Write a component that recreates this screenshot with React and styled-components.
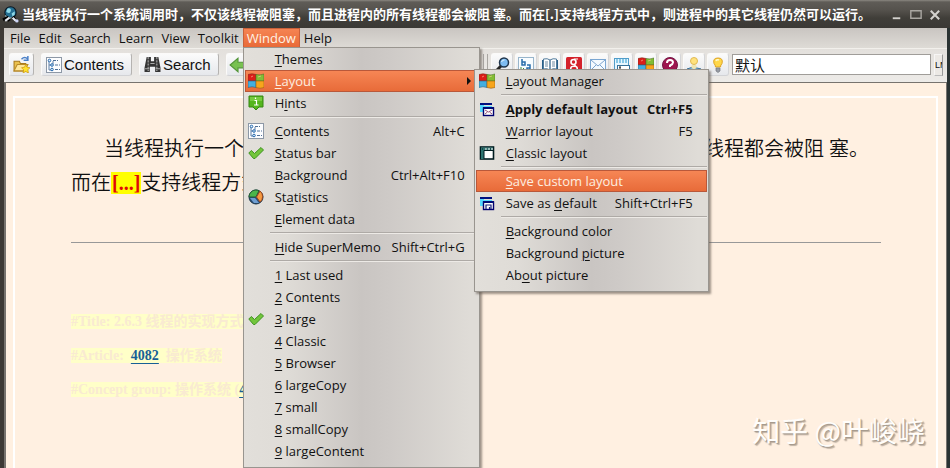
import React from "react";
import styled, { createGlobalStyle, css } from "styled-components";

const UI_FONT = '"Open Sans", "Noto Sans CJK SC", sans-serif';
const CREAM = "#fff0e1";

const GlobalStyle = createGlobalStyle`
  * { box-sizing: border-box; }
  body { margin: 0; background: #3b3835; }
  button, input { font: inherit; color: inherit; margin: 0; }
`;

const Shell = styled.div`
  position: relative;
  display: flex;
  flex-direction: column;
  min-height: 100vh;
  overflow: hidden;
  background: linear-gradient(90deg, #3d3935, #2b3333);
  font-family: ${UI_FONT};
  font-size: 13px;
  color: #111;
`;

const TitleBar = styled.header`
  display: flex;
  align-items: center;
  gap: 3px;
  height: 28px;
  padding: 0 8px 0 2px;
  background: linear-gradient(#8a8781 0, #5f5c57 2px, #55524d 10px, #403e39 18px, #3b3935 100%);
  color: #fff;
`;

const Title = styled.h1`
  flex: 1;
  margin: 0;
  font: 700 13px/20px "Noto Sans CJK SC", sans-serif;
  white-space: nowrap;
  overflow: hidden;
`;

const WindowButtons = styled.div`
  display: flex;
  gap: 4px;
`;

const WindowButton = styled.button`
  display: flex;
  width: 15px;
  padding: 0;
  border: 0;
  background: none;
`;

const Client = styled.div`
  flex: 1;
  display: flex;
  flex-direction: column;
  margin: 0 3px 0 4px;
  background: #e9e6e2;
`;

const MenuBar = styled.nav`
  display: flex;
  height: 20px;
  padding-left: 2px;
  background: linear-gradient(#c9c5c1, #dedbd6);
`;

const MenuHost = styled.div`
  position: relative;
`;

const MenuButton = styled.button`
  display: block;
  height: 20px;
  padding: 0 3px;
  border: 1px solid transparent;
  background: none;
  line-height: 18px;
  white-space: nowrap;
  ${(p) =>
    p.$open &&
    css`
      border-color: #c9603a;
      background: linear-gradient(#f58453, #e96a38);
      color: #fff3e6;
    `}
`;

const Menu = styled.div`
  position: absolute;
  z-index: 2;
  top: ${(p) => (p.$sub ? "-1px" : "19px")};
  left: ${(p) => (p.$sub ? "229px" : "0")};
  width: ${(p) => (p.$sub ? "235px" : "237px")};
  padding: 0 ${(p) => (p.$sub ? "1px" : "4px")} 5px 1px;
  border: 1px solid #99958f;
  background: linear-gradient(90deg, #e2dfda, #dfdcd7 18%, #c9c5c2 50%, #cecac7 62%, #dfdcd7 96%);
  box-shadow: 2px 2px 2px #5d554d99;
  color: #111;
`;

const ItemHost = styled.div`
  position: relative;
`;

const Item = styled.button`
  display: flex;
  align-items: center;
  width: 100%;
  height: 22px;
  padding: 0 ${(p) => (p.$sub ? "13px" : "9px")} 0 2px;
  border: 1px solid transparent;
  background: none;
  line-height: 20px;
  font-weight: ${(p) => (p.$bold ? 700 : 400)};
  text-align: left;
  white-space: nowrap;
  ${(p) =>
    p.$active &&
    css`
      padding-right: 2px;
      border-color: #b9583a;
      background: linear-gradient(#f68655, #e86b39);
      color: #fdeee0;
    `}
`;

const ItemIcon = styled.span`
  display: flex;
  flex: 0 0 27px;
`;

const ItemText = styled.span`
  flex: 1;
  u { text-underline-offset: 2px; }
`;

const Separator = styled.hr`
  height: 2px;
  margin: 2px 0 2px 25px;
  border: 0;
  border-top: 1px solid #aeaaa6;
  border-bottom: 1px solid #edeae6;
`;

const Toolbar = styled.div`
  display: flex;
  align-items: center;
  gap: 3px;
  height: 34px;
  padding: 0 4px 2px 5px;
  border-top: 1px solid #f2f0ec;
  background: linear-gradient(#e3e0dc, #edebe8);
`;

const ToolGroup = styled.div`
  display: flex;
  align-items: center;
  gap: ${(p) => (p.$tight ? "2px" : "7px")};
  flex: 0 0 auto;
`;

const NavGroup = styled(ToolGroup)`
  flex-basis: 471px;
`;

const Grip = styled.span`
  width: 5px;
  height: 22px;
  border: solid #a9a6a2;
  border-width: 0 1px;
`;

const ToolButton = styled.button`
  display: flex;
  align-items: center;
  justify-content: center;
  gap: 2px;
  height: 23px;
  min-width: ${(p) => (p.$small ? "22px" : "25px")};
  padding: 0 ${(p) => (p.$label ? "7px" : "2px")} 0 ${(p) => (p.$label ? "4px" : "2px")};
  border: 1px solid #fbfaf9;
  border-right-color: ${(p) => (p.$small ? "#d4d5d8" : "#b5b3b1")};
  border-bottom-color: #d2d3d6;
  border-radius: 3px;
  background: linear-gradient(#fbfbfb, #e6e8ec);
  font: 15px/20px "Liberation Sans", Arial, sans-serif;
`;

const LayoutField = styled.input`
  flex: 1;
  min-width: 60px;
  height: 21px;
  padding: 0 2px;
  border: 1px solid #a09d99;
  background: #fff;
  font: 15px/18px "Noto Sans CJK SC", sans-serif;
`;

const LmButton = styled.button`
  width: 9px;
  height: 22px;
  padding: 0;
  overflow: hidden;
  border: 1px solid #f7f6f5;
  border-right-color: #999;
  border-bottom-color: #bbb;
  background: #ece9e5;
  font: 9px/18px "Liberation Sans", Arial, sans-serif;
  white-space: nowrap;
  text-align: left;
`;

const Page = styled.main`
  flex: 1;
  display: flex;
  padding: 13px 8px 0 7px;
  border: 1px solid #77736e;
  border-width: 1px 1px 0 2px;
  background: ${CREAM};
`;

const Frame = styled.article`
  flex: 1;
  min-width: 0;
  padding: 34px 55px 0 56px;
  border: 2px solid #fff;
  border-bottom: 0;
`;

const Passage = styled.p`
  margin: 0;
  text-indent: 33px;
  font: 350 20px/34px "Liberation Serif", "Noto Sans CJK SC", serif;
  white-space: nowrap;
`;

const Cloze = styled.mark`
  padding: 0 1px;
  background: #ff0;
  color: #e00808;
  font-weight: 700;
`;

const Rule = styled.hr`
  height: 1px;
  margin: 42px 0 62px;
  border: 0;
  background: #989898;
`;

const Reference = styled.p`
  margin: 0;
  font: 700 14px/34px "Liberation Serif", "Noto Sans CJK SC", serif;
  white-space: nowrap;
  color: #f9ead2;
  > span { background: #ffffc8; }
`;

const RefLink = styled.a`
  color: #175f96;
  text-underline-offset: 3px;
`;

const Watermark = styled.div`
  position: absolute;
  right: 25px;
  bottom: 18px;
  font: 400 28px/40px "Noto Sans CJK SC", sans-serif;
  color: #fffdfa;
  text-shadow: 1px 1px 1px #a3978b, 2px 2px 1px #c4b6a7;
`;

const Svg = ({ size = 16, children }) => (
  <svg width={size} height={size} viewBox="0 0 16 16" aria-hidden="true">
    {children}
  </svg>
);

const icons = {
  app: (
    <>
      <circle cx="8" cy="6" r="5.3" fill="#246f92" stroke="#061622" />
      <path d="M5 2.5c3-1 4 1 3 3s-3 1-4 0zM9 7l3-2 0 3-2 2z" fill="#8dd7e6" />
      <path d="M3 9q4 4 8 1" stroke="#bcdde5" fill="none" />
      <path d="M1 13l4-2 2 3M10 10l3 4" stroke="#000" strokeWidth="3" />
      <path d="M3 14l4-3M10 11l3 3" stroke="#e3e7ef" strokeWidth="2" />
      <circle cx="14" cy="14" r="1.6" fill="#ccd4f5" />
    </>
  ),
  folder: (
    <>
      <path d="M1 14V5h5l1 2h5v7z" fill="#eac14e" stroke="#a8791d" />
      <path d="M1 14l3-6h10l-3 6z" fill="#ffe79b" stroke="#b98b28" />
      <path d="M8 3q3-3 6 0M14 0v4h-4" fill="none" stroke="#4c81c8" strokeWidth="1.4" />
      <path d="M12 8l1.2 2.6 2.8.4-2 2 .5 3-2.5-1.4L9.500 16l.5-3-2-2 2.800-.4z" fill="#ffe22e" stroke="#c68e00" strokeWidth=".6" />
    </>
  ),
  tree: (
    <>
      <rect x=".5" y=".5" width="15" height="15" fill="#fcfdff" stroke="#8d98a6" />
      <path d="M3 3v10h3M3 8h3M7 4v3" stroke="#5a7ca5" fill="none" />
      <g fill="#e3f2ff" stroke="#2669ad">
        <circle cx="3.500" cy="3.500" r="1.300" />
        <circle cx="6" cy="8" r="1.300" />
        <circle cx="6" cy="12.500" r="1.300" />
      </g>
      <path d="M7 3.500h5M9 8h5M9 12.500h5" stroke="#4f7098" strokeDasharray="3 1" />
    </>
  ),
  binoculars: (
    <>
      <path d="M2.500 1h4v4h3V1h4l2 10v4h-5v-5h-5v5h-5v-4z" fill="#343434" />
      <path d="M4 1v13M12 1v13" stroke="#8a8a8a" strokeWidth="1.500" strokeDasharray="2 1" />
      <path d="M1 12h4M11 12h4M6 7h4" stroke="#aaa" />
    </>
  ),
  back: <path d="M1 8l7-6v3.500h8v5H8V14z" fill="#78c150" stroke="#54953a" />,
  layout: (
    <>
      <path d="M0 1.500q4-1.500 8 0V8H0z" fill="#dc1d18" stroke="#842f22" strokeWidth=".6" />
      <path d="M8 1.500q4 1 8-.5V8H8z" fill="#82bd35" stroke="#4b7426" strokeWidth=".6" />
      <path d="M0 8h8v6.500q-4-1.500-8 0z" fill="#43aee0" stroke="#286382" strokeWidth=".6" />
      <path d="M8 8h8v6.500q-4 1.500-8 0z" fill="#f7a51c" stroke="#9b5e15" strokeWidth=".6" />
      <path d="M3 4l2-1M10 4l3-1" stroke="#ffd0a0" opacity=".6" />
    </>
  ),
  hint: (
    <>
      <path d="M1 1h14v11h-4l-3 3-3-3H1z" fill="#55b51e" stroke="#348712" />
      <path d="M2 2h12v4H2z" fill="#8bd955" opacity=".6" />
      <path d="M6.500 5.500h2V10M6 10h4.500M7.500 2.500v1.500" stroke="#fff" strokeWidth="1.200" fill="none" />
    </>
  ),
  check: <path d="M.8 8l2.500-2.500 3.200 3L13 2.500 15.500 5 7 13.500H5.500z" fill="#72c53b" stroke="#3f9222" />,
  stats: (
    <>
      <circle cx="8" cy="8" r="7" fill="#284e7b" stroke="#1c3548" />
      <path d="M8 8L1 8A7 7 0 0 1 11 1.700z" fill="#4bb64b" stroke="#245b35" />
      <path d="M8.500 8L12 2a7 7 0 0 1 0 11z" fill="#f69a41" stroke="#9c4820" />
      <path d="M2 9h5l4 5H6z" fill="#6f9ed1" />
    </>
  ),
  magnifier: (
    <>
      <path d="M7 9l-6 6" stroke="#252525" strokeWidth="3" />
      <circle cx="10" cy="5.500" r="4.500" fill="#7ebcf2" stroke="#20354c" strokeWidth="1.500" />
      <path d="M7.500 5q1-2.500 3-2" stroke="#e6f6ff" fill="none" />
    </>
  ),
  translate: (
    <>
      <rect x=".5" y=".5" width="15" height="15" fill="#f8fcff" stroke="#98b5cb" />
      <path d="M4 2v6h3V5H4M9 8h3v6H9v-3h3" stroke="#286caa" strokeWidth="1.500" fill="none" />
      <path d="M3 10v3h3M5 11l2 2-2 2" stroke="#438c39" fill="none" />
    </>
  ),
  book: (
    <>
      <path d="M0 3h16v12H0z" fill="#285f89" />
      <path d="M1.500 2q4-1 6.500 1v10q-3-2-6.500-1zM14.500 2Q11 1 8 3v10q3-2 6.500-1z" fill="#fff" stroke="#527c9c" />
      <path d="M3 5h3M3 7h3M3 9h3M10 5h3M10 7h3M10 9h3" stroke="#6e8ca3" />
    </>
  ),
  google: (
    <>
      <rect x="0" y="0" width="16" height="16" rx="1.500" fill="#d4222b" />
      <circle cx="7.500" cy="5" r="2.500" fill="none" stroke="#fff" strokeWidth="1.600" />
      <ellipse cx="8" cy="11.500" rx="3.300" ry="2.200" fill="none" stroke="#fff" strokeWidth="1.500" />
      <path d="M8 2h4M8 7.500l2 2" stroke="#fff" strokeWidth="1.200" />
    </>
  ),
  mail: (
    <>
      <rect x=".5" y="2.500" width="15" height="11" fill="#f4faff" stroke="#7aa6d2" />
      <path d="M1 3l7 6 7-6M1 13l5-5M15 13l-5-5" fill="none" stroke="#7ca4ce" />
    </>
  ),
  screen: (
    <>
      <rect x=".5" y="1.500" width="14" height="13" fill="#e7f7ff" stroke="#519dc9" />
      <path d="M2 3h12M2 5h12" stroke="#86c8e8" strokeWidth="2" strokeDasharray="2 1" />
      <rect x="3.500" y="8.500" width="12" height="6" fill="#fff" stroke="#36729b" />
      <path d="M5 10h2M6 10v3M5 13h2M9 13h1M12 13h1" stroke="#222" />
    </>
  ),
  help: (
    <>
      <circle cx="8" cy="8" r="7.500" fill="#9d164f" stroke="#731743" />
      <path d="M5 6q0-3 3-3t3 2.500Q11 7 8 8.500V10M8 12v2" fill="none" stroke="#fff" strokeWidth="2" />
    </>
  ),
  person: (
    <>
      <path d="M1 12l6-2 8 2-6 3z" fill="#83b9dc" stroke="#3d7299" />
      <path d="M5 10q0-2 3-3 3 1 3 3l-3 3z" fill="#eee5b2" />
      <circle cx="8" cy="4" r="3.500" fill="#ffe27d" stroke="#e0b954" />
    </>
  ),
  bulb: (
    <>
      <path d="M5.500 10q0-2-1.500-3.500Q2.500 1 8 1t4 5.500Q10.500 8 10.500 10z" fill="#ffd749" stroke="#dda223" />
      <path d="M6 4q1-2 3-1" stroke="#fff8c8" strokeWidth="1.500" fill="none" />
      <path d="M6 11h4v3l-2 1.500L6 14z" fill="#969ba4" stroke="#747780" strokeWidth=".7" />
    </>
  ),
  apply: (
    <>
      <path d="M1 3h4v8H1z" fill="#54d9ff" />
      <path d="M1 3h12" stroke="#001080" strokeWidth="2" />
      <path d="M4 5h9v2H4z" fill="#54d9ff" />
      <rect x="4.500" y="7" width="10" height="7.500" fill="#fff" stroke="#00006f" strokeWidth="1.400" />
      <path d="M4 7h11" stroke="#000b75" strokeWidth="2" />
      <path d="M6 9l3.500 2L13 9M6 13l2.500-2M13 13l-2.500-2" stroke="#97547b" fill="none" />
    </>
  ),
  saveLayout: (
    <>
      <path d="M1 3h4v8H1z" fill="#54d9ff" />
      <path d="M1 3h12" stroke="#001080" strokeWidth="2" />
      <path d="M4 5h9v2H4z" fill="#54d9ff" />
      <rect x="4.500" y="7" width="10" height="7.500" fill="#fff" stroke="#00006f" strokeWidth="1.400" />
      <path d="M4 7h11" stroke="#000b75" strokeWidth="2" />
      <path d="M7 14v-4h5v4M10.500 12v2" stroke="#17217b" strokeWidth="1.200" fill="none" />
    </>
  ),
  classic: (
    <>
      <rect x="1.500" y="2" width="13" height="12" fill="#fff" stroke="#001b20" strokeWidth="1.600" />
      <path d="M2 2.500h12v3H5V14H2z" fill="#2d7471" />
      <path d="M5 5.500h9M5 5.500V14M3 4h1M7 4h1M11 4h1" stroke="#001d22" />
      <path d="M7 3v2M10 3v2M13 3v2" stroke="#fff" />
    </>
  ),
};

const Icon = ({ name, size }) => (name ? <Svg size={size}>{icons[name]}</Svg> : null);

/* The character after "&" is the keyboard mnemonic. */
const Mnemonic = ({ text }) => {
  const at = text.indexOf("&");
  if (at < 0) return text;
  return (
    <>
      {text.slice(0, at)}
      <u>{text[at + 1]}</u>
      {text.slice(at + 2)}
    </>
  );
};

const LAYOUT_ITEMS = [
  { text: "&Layout Manager", icon: "layout" },
  null,
  { text: "&Apply default layout", icon: "apply", keys: "Ctrl+F5", bold: true },
  { text: "&Warrior layout", keys: "F5" },
  { text: "&Classic layout", icon: "classic" },
  null,
  { text: "&Save custom layout", active: true },
  { text: "Save as &default", icon: "saveLayout", keys: "Shift+Ctrl+F5" },
  null,
  { text: "&Background color" },
  { text: "Background &picture" },
  { text: "Ab&out picture" },
];

const WINDOW_ITEMS = [
  { text: "&Themes" },
  { text: "&Layout", icon: "layout", active: true, children: LAYOUT_ITEMS },
  { text: "H&ints", icon: "hint" },
  null,
  { text: "&Contents", icon: "tree", keys: "Alt+C" },
  { text: "&Status bar", icon: "check" },
  { text: "&Background", keys: "Ctrl+Alt+F10" },
  { text: "St&atistics", icon: "stats" },
  { text: "&Element data" },
  null,
  { text: "&Hide SuperMemo", keys: "Shift+Ctrl+G" },
  null,
  { text: "&1 Last used" },
  { text: "&2 Contents" },
  { text: "&3 large", icon: "check" },
  { text: "&4 Classic" },
  { text: "&5 Browser" },
  { text: "&6 largeCopy" },
  { text: "&7 small" },
  { text: "&8 smallCopy" },
  { text: "&9 largeContent" },
];

const MenuList = ({ items, sub }) => (
  <Menu role="menu" $sub={sub}>
    {items.map((item, i) =>
      item ? (
        <ItemHost key={i}>
          <Item role="menuitem" $active={item.active} $bold={item.bold} $sub={sub}>
            <ItemIcon><Icon name={item.icon} /></ItemIcon>
            <ItemText><Mnemonic text={item.text} /></ItemText>
            {item.keys && <span>{item.keys}</span>}
            {item.children && (
              <svg width="5" height="8" viewBox="0 0 5 8" aria-hidden="true">
                <path d="M0 0l4 4-4 4z" fill="#111" />
              </svg>
            )}
          </Item>
          {item.children && <MenuList items={item.children} sub />}
        </ItemHost>
      ) : (
        <Separator key={i} />
      )
    )}
  </Menu>
);

const MENUS = ["File", "Edit", "Search", "Learn", "View", "Toolkit", "Window", "Help"];

const TOOLS = [
  ["magnifier", "Find"],
  ["translate", "Translate"],
  ["book", "Dictionary"],
  ["google", "Google"],
  ["mail", "Mail"],
  ["screen", "Screen"],
  ["layout", "Layout"],
  ["help", "Help"],
  ["person", "Tutor"],
  ["bulb", "Hint"],
];

export default function App() {
  return (
    <Shell>
      <GlobalStyle />
      <TitleBar>
        <Icon name="app" size={17} />
        <Title>
          当线程执行一个系统调用时，不仅该线程被阻塞，而且进程内的所有线程都会被阻 塞。而在[.]支持线程方式中，则进程中的其它线程仍然可以运行。
        </Title>
        <WindowButtons>
          <WindowButton aria-label="Minimize">
            <Svg size={15}><path d="M4 12h8" stroke="#d4d2ce" strokeWidth="2" /></Svg>
          </WindowButton>
          <WindowButton aria-label="Maximize">
            <Svg size={15}><path d="M3 4h11v8H3z" fill="none" stroke="#aaa7a2" strokeWidth="1.500" /></Svg>
          </WindowButton>
          <WindowButton aria-label="Close">
            <Svg size={15}><path d="M4 4l9 9M13 4l-9 9" stroke="#d4d2ce" strokeWidth="2.200" /></Svg>
          </WindowButton>
        </WindowButtons>
      </TitleBar>
      <Client>
        <MenuBar>
          {MENUS.map((name) => (
            <MenuHost key={name}>
              <MenuButton $open={name === "Window"}>{name}</MenuButton>
              {name === "Window" && <MenuList items={WINDOW_ITEMS} />}
            </MenuHost>
          ))}
        </MenuBar>
        <Toolbar>
          <NavGroup>
            <ToolButton aria-label="Open"><Icon name="folder" size={17} /></ToolButton>
            <ToolButton $label><Icon name="tree" />Contents</ToolButton>
            <ToolButton $label><Icon name="binoculars" size={17} />Search</ToolButton>
            <ToolButton aria-label="Back"><Icon name="back" size={18} /></ToolButton>
          </NavGroup>
          <Grip />
          <ToolGroup $tight>
            {TOOLS.map(([icon, label]) => (
              <ToolButton key={icon} $small aria-label={label}><Icon name={icon} /></ToolButton>
            ))}
          </ToolGroup>
          <LayoutField aria-label="Layout" defaultValue="默认" />
          <LmButton>LM</LmButton>
        </Toolbar>
        <Page>
          <Frame>
            <Passage>
              当线程执行一个系统调用时，不仅该线程被阻塞，而且进程内的所有线程都会被阻 塞。
              <br />
              而在<Cloze>[...]</Cloze>支持线程方式中，则进程中的其它线程仍然可以运行。
            </Passage>
            <Rule />
            <Reference><span>#Title: 2.6.3 线程的实现方式</span></Reference>
            <Reference><span>#Article:&nbsp; <RefLink href="#4082">4082</RefLink>&nbsp; 操作系统</span></Reference>
            <Reference><span>#Concept group: 操作系统 (<RefLink href="#4081">4081</RefLink>)</span></Reference>
          </Frame>
        </Page>
      </Client>
      <Watermark>知乎 @叶峻峣</Watermark>
    </Shell>
  );
}
